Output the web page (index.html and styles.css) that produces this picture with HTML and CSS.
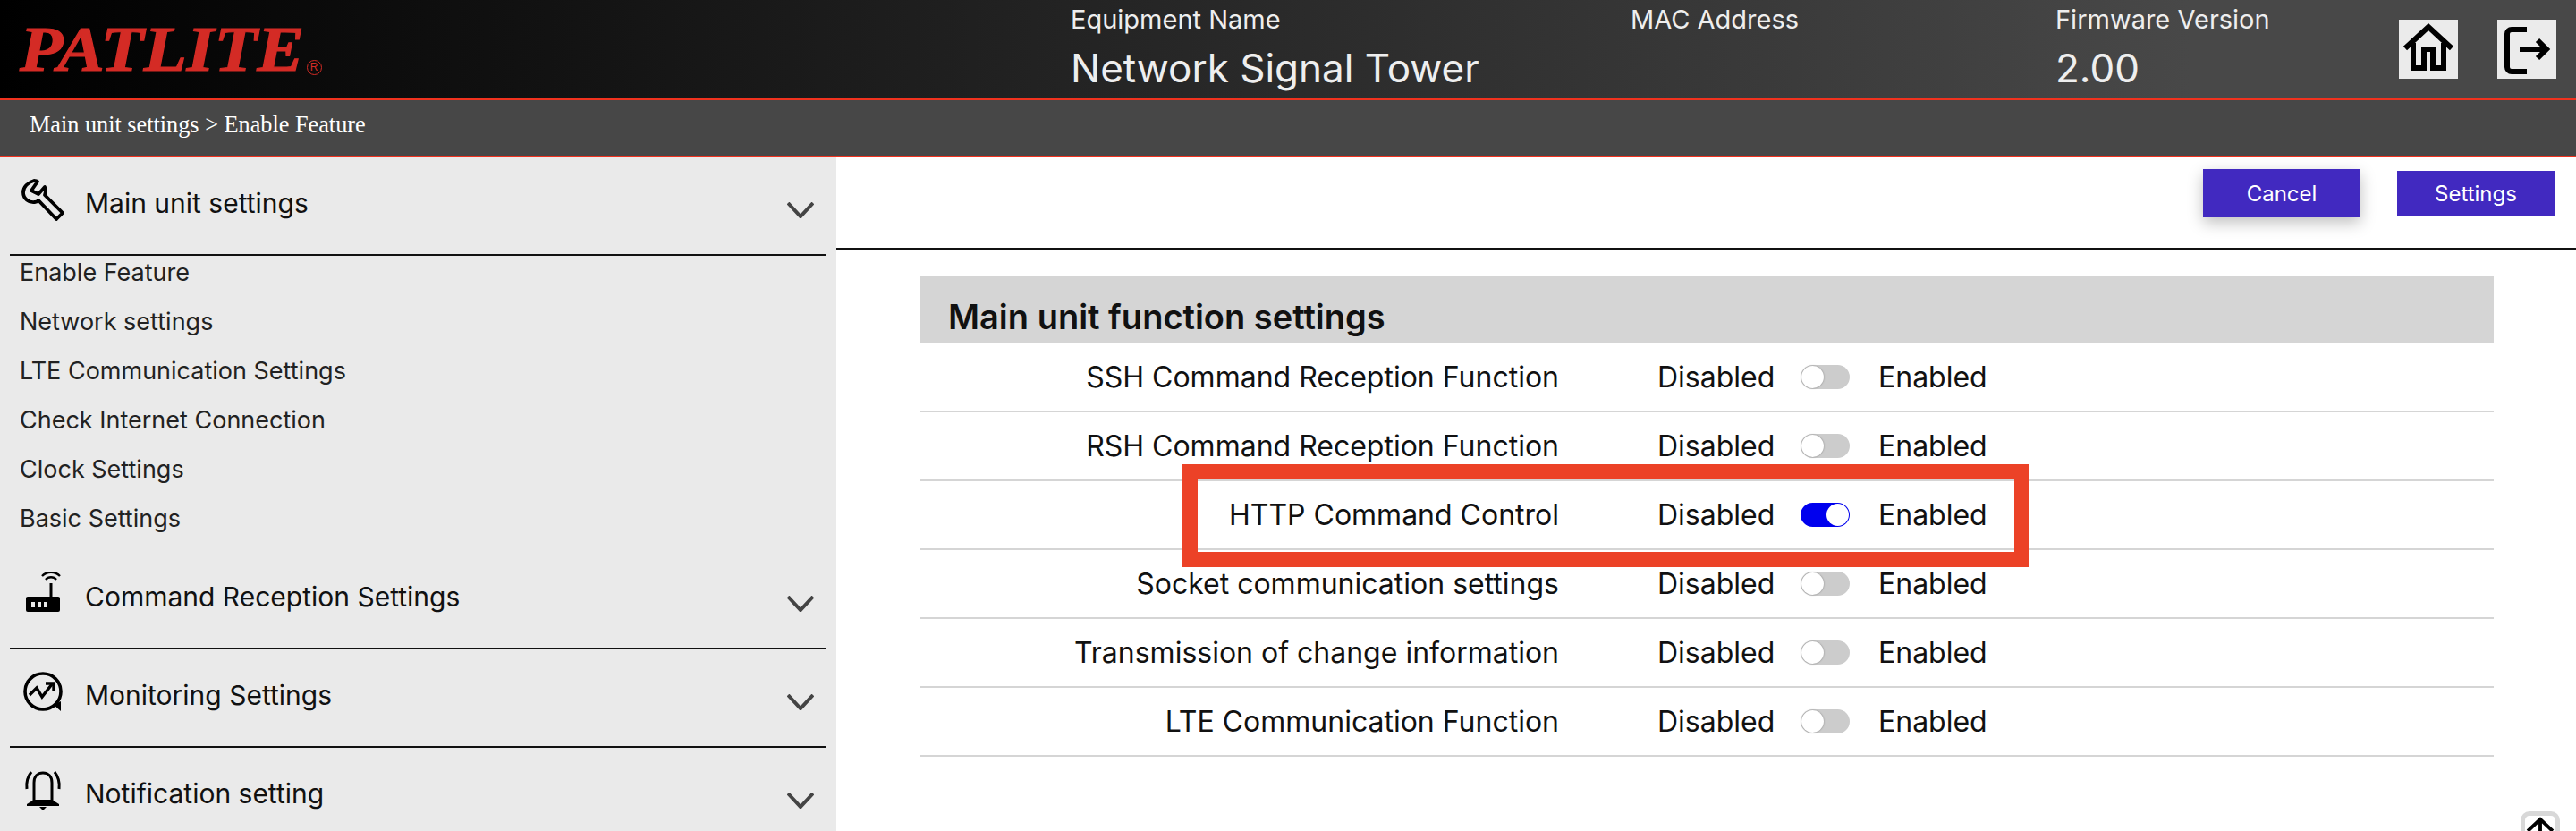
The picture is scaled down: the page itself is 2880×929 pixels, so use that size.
FILE: index.html
```html
<!DOCTYPE html>
<html lang="en">
<head>
<meta charset="utf-8">
<title>Enable Feature</title>
<link rel="stylesheet" href="styles.css">
</head>
<body>
<header class="topbar">
  <div class="logo"><span class="logo-word">PATLITE</span><span class="logo-mark">R</span></div>
  <div class="info info-name"><div class="info-label">Equipment Name</div><div class="info-value">Network Signal Tower</div></div>
  <div class="info info-mac"><div class="info-label">MAC Address</div><div class="info-value"></div></div>
  <div class="info info-fw"><div class="info-label">Firmware Version</div><div class="info-value">2.00</div></div>
  <a class="tool-btn tool-home" aria-label="Home">
    <svg viewBox="0 0 66 66" width="66" height="66"><path d="M7 32 33 8 59 32" fill="none" stroke="#000" stroke-width="6"/><path d="M16 26V54H28V33H38V54H50V26" fill="none" stroke="#000" stroke-width="6"/></svg>
  </a>
  <a class="tool-btn" aria-label="Log out">
    <svg viewBox="0 0 66 66" width="66" height="66"><path d="M33 11H16a5 5 0 0 0-5 5V53a5 5 0 0 0 5 5H33" fill="none" stroke="#000" stroke-width="6"/><path d="M25 33H55M45 23 55 33 45 43" fill="none" stroke="#000" stroke-width="6"/></svg>
  </a>
</header>
<nav class="crumbs">Main unit settings &gt; Enable Feature</nav>
<div class="layout">
  <aside class="sidebar">
    <section class="group">
      <div class="group-head">
        <svg class="group-icon" viewBox="0 0 48 48"><path d="M14 2C7 4 2 9 2 15C2 22 8 27 15 26C16 26 18 25 19 24L39 45L46 38L26 18C27 15 27 11 26 9L19 17L11 13L18 3C17 2 15 2 14 2Z" fill="none" stroke="#000" stroke-width="3.8" stroke-linejoin="round"/></svg>
        <span class="group-title">Main unit settings</span>
        <svg class="chev" viewBox="0 0 30 18"><path d="M1 1 15 16 29 1" fill="none" stroke="#444" stroke-width="4"/></svg>
      </div>
      <ul class="sub">
        <li>Enable Feature</li>
        <li>Network settings</li>
        <li>LTE Communication Settings</li>
        <li>Check Internet Connection</li>
        <li>Clock Settings</li>
        <li>Basic Settings</li>
      </ul>
    </section>
    <section class="group">
      <div class="group-head">
        <svg class="group-icon" viewBox="0 0 48 48"><rect x="5" y="27" width="38" height="17" rx="2" fill="#000"/><rect x="11" y="33" width="4" height="6" fill="#eaeaea"/><rect x="18" y="33" width="4" height="6" fill="#eaeaea"/><rect x="25" y="33" width="4" height="6" fill="#eaeaea"/><path d="M33 27V12" stroke="#000" stroke-width="3"/><path d="M27 8a8 8 0 0 1 12 0M23 4a14 14 0 0 1 20 0" fill="none" stroke="#000" stroke-width="2.4"/></svg>
        <span class="group-title">Command Reception Settings</span>
        <svg class="chev" viewBox="0 0 30 18"><path d="M1 1 15 16 29 1" fill="none" stroke="#444" stroke-width="4"/></svg>
      </div>
    </section>
    <section class="group">
      <div class="group-head">
        <svg class="group-icon" viewBox="0 0 48 48"><circle cx="24" cy="23" r="20" fill="none" stroke="#000" stroke-width="3.6"/><path d="M36 38 44 45V34" fill="#000"/><path d="M9 27 17 19 23 29 34 15" fill="none" stroke="#000" stroke-width="3.4"/><path d="M27 14H36V23" fill="none" stroke="#000" stroke-width="3.4"/></svg>
        <span class="group-title">Monitoring Settings</span>
        <svg class="chev" viewBox="0 0 30 18"><path d="M1 1 15 16 29 1" fill="none" stroke="#444" stroke-width="4"/></svg>
      </div>
    </section>
    <section class="group">
      <div class="group-head">
        <svg class="group-icon" viewBox="0 0 48 48"><path d="M14 36V15C14 8 18 4 24 4C30 4 34 8 34 15V36" fill="none" stroke="#000" stroke-width="3"/><path d="M6 39 14 34H34L42 39V41H6Z" fill="#000"/><path d="M20 42H28L24 46Z" fill="#000"/><path d="M6 22C5 14 7 8 11 3M42 22C43 14 41 8 37 3" fill="none" stroke="#000" stroke-width="3"/></svg>
        <span class="group-title">Notification setting</span>
        <svg class="chev" viewBox="0 0 30 18"><path d="M1 1 15 16 29 1" fill="none" stroke="#444" stroke-width="4"/></svg>
      </div>
    </section>
  </aside>
  <main class="content">
    <div class="actions">
      <button class="btn btn-raised">Cancel</button>
      <button class="btn">Settings</button>
    </div>
    <section class="panel">
      <h2 class="panel-title">Main unit function settings</h2>
      <div class="row"><span class="row-label">SSH Command Reception Function</span><span class="state-off">Disabled</span><span class="switch"></span><span class="state-on">Enabled</span></div>
      <div class="row"><span class="row-label">RSH Command Reception Function</span><span class="state-off">Disabled</span><span class="switch"></span><span class="state-on">Enabled</span></div>
      <div class="row row-marked"><span class="row-label">HTTP Command Control</span><span class="state-off">Disabled</span><span class="switch switch-on"></span><span class="state-on">Enabled</span><div class="marker"></div></div>
      <div class="row"><span class="row-label">Socket communication settings</span><span class="state-off">Disabled</span><span class="switch"></span><span class="state-on">Enabled</span></div>
      <div class="row"><span class="row-label">Transmission of change information</span><span class="state-off">Disabled</span><span class="switch"></span><span class="state-on">Enabled</span></div>
      <div class="row"><span class="row-label">LTE Communication Function</span><span class="state-off">Disabled</span><span class="switch"></span><span class="state-on">Enabled</span></div>
    </section>
  </main>
</div>
<a class="to-top" aria-label="Back to top">
  <svg viewBox="0 0 44 44" width="34" height="34"><path d="M4 22 22 5 40 22M22 6V40" fill="none" stroke="#000" stroke-width="5"/></svg>
</a>
</body>
</html>
```
FILE: styles.css
```css
* { box-sizing: border-box; }
html, body { margin: 0; height: 929px; overflow: hidden; }
body { font-family: Inter, "Noto Sans", sans-serif; color: #111; background: #fff; display: flex; flex-direction: column; }

.topbar { height: 112px; flex: none; display: flex; align-items: flex-start; background: linear-gradient(90deg, #000 0%, #484848 85%, #484848 100%); border-bottom: 2px solid #f0321e; position: relative; }
.logo { width: 1197px; padding: 24px 0 0 22px; display: flex; align-items: flex-end; height: 86px; flex: none; }
.logo-word { font: italic 700 71px/62px "Liberation Serif", serif; color: #d42b25; display: inline-block; transform: scaleX(1.11); transform-origin: 0 100%; -webkit-text-stroke: 1.2px #d42b25; }
.logo-mark { margin-left: 34px; width: 17px; height: 17px; border: 1.5px solid #d42b25; border-radius: 50%; color: #d42b25; font: 400 12px/14px "Liberation Sans", sans-serif; text-align: center; margin-bottom: 2px; }
.info { flex: none; color: #eee; padding-top: 4px; }
.info-name { width: 626px; }
.info-mac { width: 475px; }
.info-fw { width: 384px; }
.info-label { font-size: 29px; line-height: 36px; }
.info-value { font-size: 44px; line-height: 60px; margin-top: 6px; height: 60px; }
.tool-btn { flex: none; width: 66px; height: 66px; margin-top: 22px; background: #ebebeb; display: block; }
.tool-btn svg { display: block; }
.tool-home { margin-right: 44px; }

.crumbs { height: 64px; flex: none; background: #474747; border-bottom: 2px solid #f0321e; color: #fff; font: 26.25px/56px "Liberation Serif", serif; padding-left: 33px; }

.layout { flex: 1; display: flex; min-height: 0; }
.sidebar { width: 935px; flex: none; background: #eaeaea; padding: 0 11px; overflow: hidden; }
.group { border-bottom: 2px solid #111; }
.group:first-child { border-bottom: 0; }
.group-head { height: 108px; display: flex; align-items: flex-start; padding: 24px 14px 0 13px; }
.group:first-child .group-head { height: 110px; border-bottom: 2px solid #111; }
.group-icon { width: 48px; height: 48px; flex: none; margin-right: 23px; }
.group-title { font-size: 30px; line-height: 54px; color: #111; }
.chev { width: 30px; height: 18px; margin: 26px 0 0 auto; flex: none; }
.sub { list-style: none; margin: 0; padding: 0 0 0 11px; }
.sub li { height: 55px; line-height: 38px; font-size: 27px; color: #222; }

.content { flex: 1; min-width: 0; }
.actions { height: 103px; display: flex; justify-content: flex-end; align-items: flex-start; gap: 41px; padding: 13px 24px 0 0; border-bottom: 2px solid #111; }
.btn { width: 176px; height: 50px; border: 0; background: #4129c0; color: #fff; font-family: Inter, "Noto Sans", sans-serif; font-size: 24px; margin-top: 2px; padding: 0; }
.btn-raised { height: 54px; margin-top: 0; box-shadow: 0 6px 16px rgba(0,0,0,.25); }

.panel { margin: 29px 0 0 94px; width: 1759px; }
.panel-title { margin: 0; height: 76px; background: #d5d5d5; font-size: 38px; font-weight: 600; line-height: 92px; padding-left: 31px; color: #111; overflow: hidden; }
.row { height: 77px; border-bottom: 2px solid #d5d5d5; display: flex; align-items: center; font-size: 32px; color: #111; position: relative; }
.row-label { width: 714px; text-align: right; margin-right: 110px; flex: none; white-space: nowrap; }
.state-off { width: 128px; flex: none; margin-right: 32px; white-space: nowrap; }
.state-on { margin-left: 32px; white-space: nowrap; }
.switch { width: 55px; height: 27px; flex: none; border-radius: 14px; background: #ccc; position: relative; }
.switch::after { content: ""; position: absolute; left: 1px; top: 1px; width: 25px; height: 25px; border-radius: 50%; background: #fff; box-shadow: 0 0 2px rgba(0,0,0,.4); }
.switch-on { background: #0000ee; }
.switch-on::after { left: 29px; box-shadow: none; }
.marker { position: absolute; left: 293px; top: -19px; width: 947px; height: 115px; border: 17px solid #ec4227; pointer-events: none; }

.to-top { position: fixed; left: 2818px; top: 907px; width: 44px; height: 44px; border: 5px solid #d8d8d8; border-radius: 10px; background: #fff; display: flex; align-items: center; justify-content: center; }
```
